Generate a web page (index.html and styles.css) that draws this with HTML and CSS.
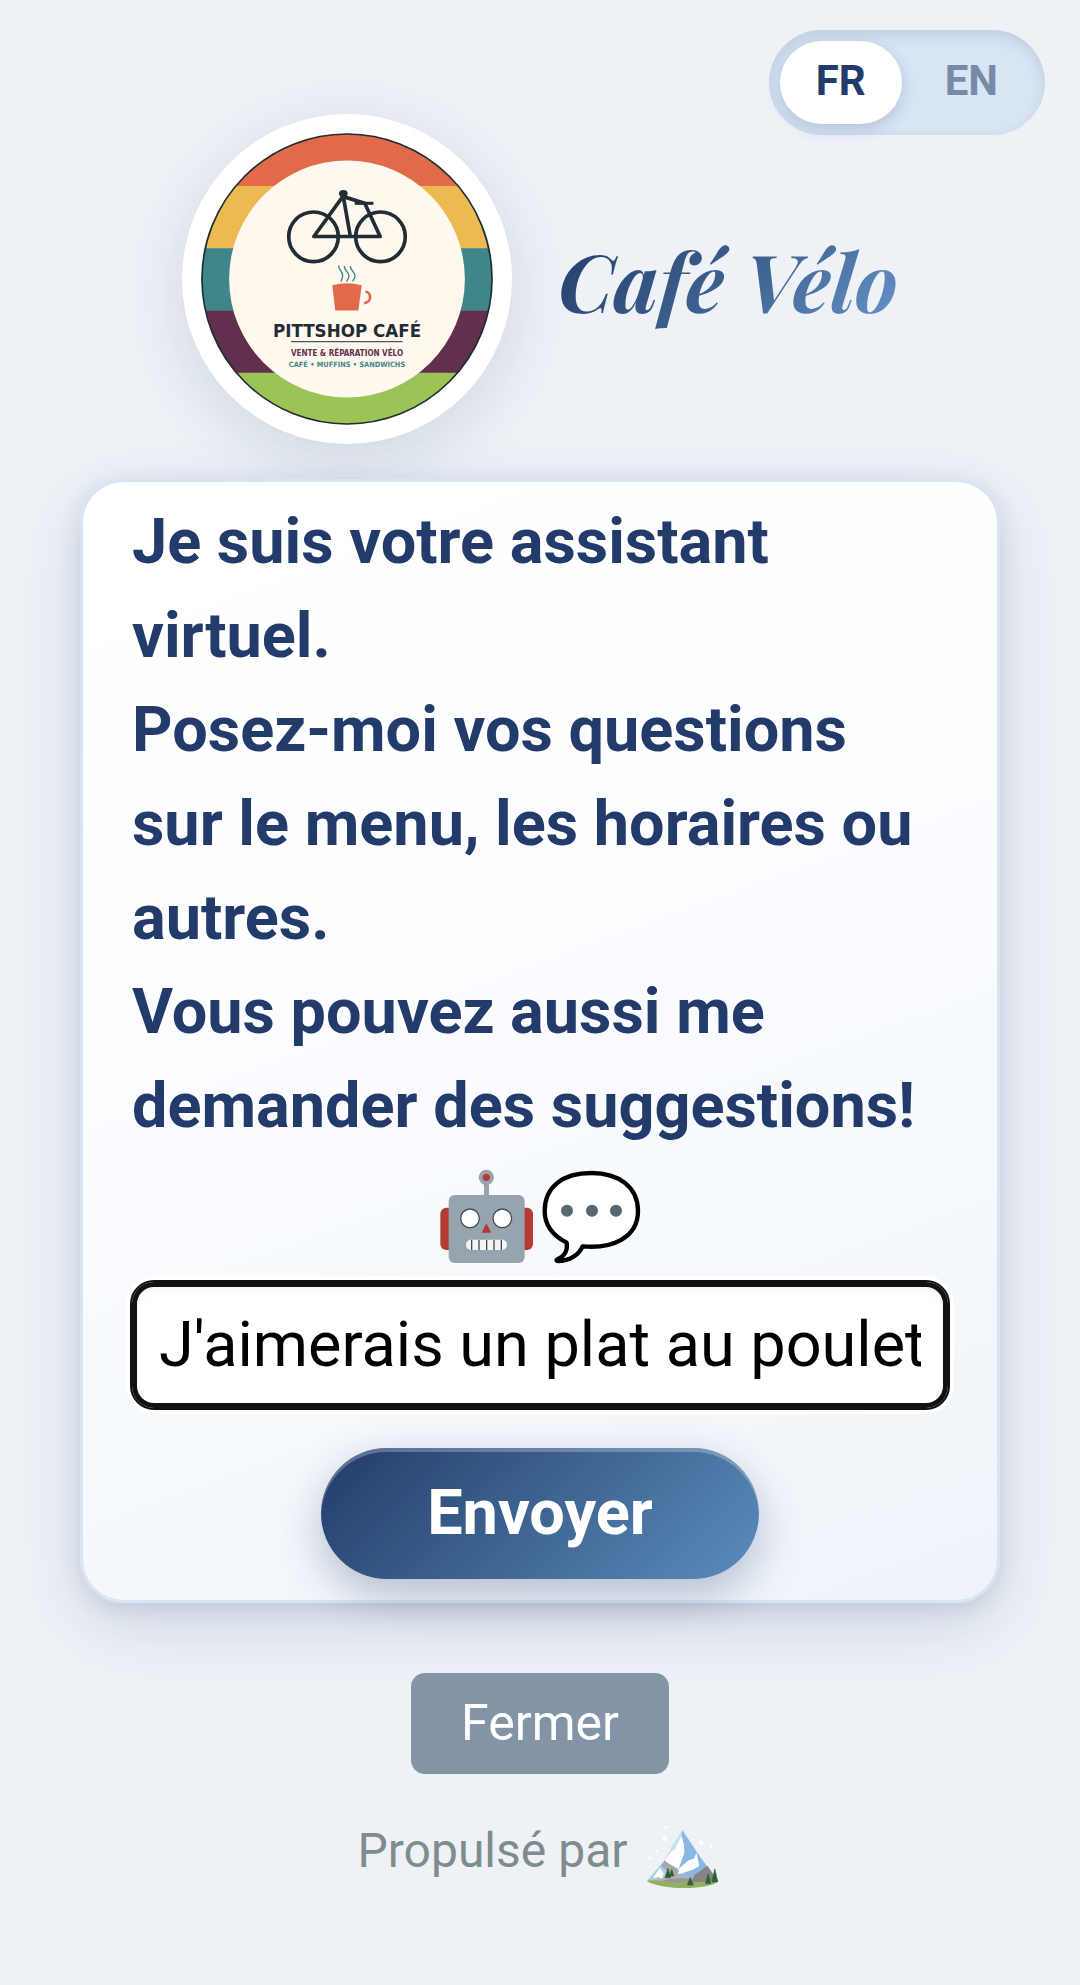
FILE: index.html
```html
<!DOCTYPE html>
<html lang="fr">
<head>
<meta charset="utf-8">
<meta name="viewport" content="width=device-width, initial-scale=1">
<title>Café Vélo</title>
<link rel="stylesheet" href="styles.css">
</head>
<body>

  <nav class="topbar">
    <div class="lang-switch">
      <button type="button" class="lang active">FR</button>
      <button type="button" class="lang">EN</button>
    </div>
  </nav>

  <header class="brand">
    <div class="logo">
      <svg viewBox="91 100 872 872" role="img" aria-label="Pittshop Café">
        <clipPath id="disc"><circle cx="527" cy="536" r="434"/></clipPath>
        <g clip-path="url(#disc)">
          <rect x="91" y="100" width="872" height="159" fill="#e06a4a"/>
          <rect x="91" y="258" width="872" height="187" fill="#ecba51"/>
          <rect x="91" y="444" width="872" height="187" fill="#3f868a"/>
          <rect x="91" y="630" width="872" height="187" fill="#62304d"/>
          <rect x="91" y="816" width="872" height="156" fill="#9ac456"/>
        </g>
        <circle cx="527" cy="536" r="433" fill="none" stroke="#212d34" stroke-width="5"/>
        <ellipse cx="527" cy="536" rx="352" ry="354" fill="#fff8ee"/>

        <!-- bike -->
        <g fill="none" stroke="#212d34" stroke-width="11">
          <circle cx="427" cy="410" r="74"/>
          <circle cx="627" cy="410" r="74"/>
          <path d="M516 288 428 409H626L580 310 516 290 537 409" stroke-linejoin="round"/>
          <path d="M550 310H606" stroke-width="9"/>
        </g>
        <ellipse cx="516" cy="281" rx="13" ry="11" fill="#212d34"/>

        <!-- cup -->
        <g fill="none" stroke="#3f868a" stroke-width="4">
          <path d="M502 495c-1 16 12 16 12 30 0 9-4 12-5 19"/>
          <path d="M519 497c-1 14 14 17 14 30 0 8-6 11-7 17"/>
          <path d="M537 497c-1 14 14 17 14 30 0 8-6 11-7 16"/>
        </g>
        <path d="M483 555q44-13 88 0L561 630H492Z" fill="#e06a4a"/>
        <path d="M582 574c8 0 14 8 14 17s-8 17-18 17" fill="none" stroke="#e06a4a" stroke-width="8"/>

        <text class="logo-name" x="527" y="708">PITTSHOP CAFÉ</text>
        <path d="M360 723H693" stroke="#4d565b" stroke-width="4"/>
        <text class="logo-line plum" x="527" y="766">VENTE &amp; RÉPARATION VÉLO</text>
        <text class="logo-line teal" x="527" y="798">CAFÉ • MUFFINS • SANDWICHS</text>
      </svg>
    </div>
    <h1>Café Vélo</h1>
  </header>

  <main class="card">
    <p class="intro">Je suis votre assistant virtuel.<br>
      Posez-moi vos questions sur le menu, les horaires ou autres.<br>
      Vous pouvez aussi me demander des suggestions!</p>

    <div class="emojis">
      <svg viewBox="60 57 606 285" aria-hidden="true">
        <!-- robot -->
        <rect x="64" y="173" width="50" height="127" rx="18" fill="#b53a33"/>
        <rect x="292" y="173" width="50" height="127" rx="18" fill="#b53a33"/>
        <rect x="195" y="95" width="15" height="45" fill="#95a4af"/>
        <circle cx="202" cy="82" r="23" fill="#95a4af"/>
        <circle cx="202" cy="82" r="11" fill="#b53a33"/>
        <rect x="89" y="135" width="228" height="204" rx="18" fill="#95a4af"/>
        <circle cx="153" cy="205" r="28" fill="#fff" stroke="#454b50" stroke-width="4"/>
        <circle cx="250" cy="205" r="28" fill="#fff" stroke="#454b50" stroke-width="4"/>
        <path d="M202 220 217 248H188Z" fill="#b53a33"/>
        <rect x="141" y="269" width="123" height="31" rx="15" fill="#f4f4f4"/>
        <path d="M158 270v30M180 270v30M203 270v30M225 270v30M247 270v30" stroke="#454b50" stroke-width="4"/>
        <!-- bubble -->
        <path d="M517 69C432 69 377 110 377 183c0 44 27 75 66 95 4 22-6 42-28 50-4 2-3 5 2 5 35 0 62-18 74-44 90 8 166-27 166-106 0-71-56-114-140-114Z" fill="#fff" stroke="#000" stroke-width="13" stroke-linejoin="round"/>
        <g fill="#586771">
          <circle cx="444" cy="182" r="18"/>
          <circle cx="519" cy="182" r="18"/>
          <circle cx="591" cy="182" r="18"/>
        </g>
      </svg>
    </div>

    <form class="ask">
      <input type="text" class="question" aria-label="Votre question" value="J'aimerais un plat au poulet">
      <button type="submit" class="send">Envoyer</button>
    </form>
  </main>

  <button type="button" class="close">Fermer</button>

  <footer class="powered">
    <span>Propulsé par</span>
    <svg viewBox="910 518 224 198" aria-hidden="true">
      <g fill="#fff">
        <circle cx="968" cy="560" r="7"/><circle cx="1080" cy="573" r="7"/>
        <circle cx="972" cy="525" r="4"/><circle cx="942" cy="598" r="4"/>
        <circle cx="922" cy="621" r="4"/><circle cx="1112" cy="584" r="4"/>
        <circle cx="1065" cy="546" r="3"/><circle cx="1113" cy="606" r="3"/>
      </g>
      <path d="M1022 534 965 630 912 692h219l-66-93Z" fill="#8ab8e2"/>
      <path d="M1022 534 990 580 982 608 1001 590 1016 562Z" fill="#c7e0f5"/>
      <path d="M1019 552 1026 577 1028 603 1010 654 965 630 983 604 1000 590Z" fill="#fff"/>
      <path d="M1065 603 1074 645 1055 656 1020 668 995 672 1012 652 1040 628 1058 622Z" fill="#fff"/>
      <path d="M965 627 1012 660 1000 682 955 672Z" fill="#a9a8a8"/>
      <path d="M1099 644 1131 690 1120 700H1045L1060 672Z" fill="#858585"/>
      <path d="M955 645 912 692 960 690 977 663Z" fill="#a8cdee"/>
      <path d="M952 650 930 682 951 678 957 688 964 668Z" fill="#fff"/>
      <path d="M912 691 965 682 1010 674 1056 676 1045 702H960Z" fill="#b3b3b2"/>
      <path d="M960 690q45-14 90-4l-10 12h-60Z" fill="#989898"/>
      <path d="M912 691c35-4 50 4 95 4 50 1 90-2 124-3-20 28-179 28-219-1Z" fill="#93b062"/>
      <path d="M977 652 968 681h17ZM989 655 982 676h13ZM1046 680 1037 704h18ZM1102 669 1093 699h16ZM1122 654 1113 694h18Z" fill="#2e5f3a" stroke="#2e5f3a" stroke-width="2"/>
    </svg>
  </footer>

</body>
</html>
```
FILE: styles.css
```css
* {box-sizing: border-box;}

body {
  margin: 0; padding: 30px 35px; min-height: 100vh;
  display: flex; flex-direction: column; align-items: center;
  background: #eef2f7; color: #233b6a;
  font-family: Roboto, "Open Sans", sans-serif;
}
button, input {font-family: inherit;}
button {border: 0; cursor: pointer;}

/*language switch*/
.topbar {align-self: stretch; display: flex; justify-content: flex-end;}
.lang-switch {
  display: flex; gap: 7px; padding: 11px;
  background: #d8e5f5; border-radius: 55px;
  box-shadow: inset 0 5px 14px rgba(35, 59, 106, .14);
}
.lang {
  padding: 0 36px 4px; height: 83px; border-radius: 42px;
  background: none; color: #778ba8;
  font-size: 42px; font-weight: 700;
}
.lang.active {
  background: #fff; color: #233b6a;
  box-shadow: 0 5px 16px rgba(35, 59, 106, .2);
}

/*header*/
.brand {
  display: flex; align-items: center; justify-content: center; gap: 46px;
  margin: -21px 0 35px;
}
.logo {
  padding: 19px; background: #fff; border-radius: 50%;
  box-shadow: 0 16px 66px rgba(35, 59, 106, .15);
}
.logo svg {display: block; width: 292px;}
.logo-name, .logo-line {text-anchor: middle; font-weight: 700;}
.logo-name {font-family: "DejaVu Sans", sans-serif; font-size: 50px; fill: #212d34;}
.logo-line {font-family: "DejaVu Sans Condensed", "DejaVu Sans", sans-serif; font-size: 24px;}
.plum {fill: #62304d;}
.teal {fill: #3f868a; font-size: 22px;}

h1 {
  margin: 0;
  font: italic 700 81px/110px "Playfair Display", "Liberation Serif", serif;
  background: linear-gradient(135deg, #233b6a, #3f6491 55%, #6a96cc);
  -webkit-background-clip: text; background-clip: text;
  color: transparent;
}

/*chat card*/
.card {
  width: calc(100% - 90px); padding: 13px 49px 21px;
  border: 3px solid #d8e5f5; border-radius: 44px;
  background: linear-gradient(160deg, #fff, #fcfdff 40%, #eff4fa);
  box-shadow: 0 22px 66px rgba(35, 59, 106, .15), 0 5px 22px rgba(35, 59, 106, .12);
}
.intro {margin: 0; font-size: 63px; font-weight: 700; line-height: 94px;}
.emojis {display: flex; justify-content: center; padding: 16px 0 18px;}
.emojis svg {width: 202px; height: 95px;}

.ask {display: flex; flex-direction: column; align-items: center; gap: 40px;}
.question {
  width: 100%; height: 126px; padding: 0 22px 2px;
  border: 5px solid #111; border-radius: 22px;
  outline: 2px solid #111;
  background: #fff; color: #000; font-size: 63px;
  box-shadow: 0 0 0 6px #fff, inset 0 5px 11px rgba(0, 0, 0, .03);
}
.send {
  padding: 0 106px 2px; height: 131px; border-radius: 66px;
  background: linear-gradient(135deg, #233b6a, #426996 55%, #5a8cbd);
  color: #fff; font-size: 63px; font-weight: 700;
  box-shadow: 0 16px 44px rgba(35, 59, 106, .3), inset 0 4px 0 rgba(255, 255, 255, .25);
}

/*below the card*/
.close {
  margin-top: 70px; padding: 0 50px 2px; height: 101px; border-radius: 14px;
  background: #8494a7; color: #fff; font-size: 50px;
}
.powered {
  display: flex; align-items: center; gap: 18px;
  margin-top: 39px; padding-right: 4px;
  color: #7f8c8d; font-size: 48px; line-height: 64px;
}
.powered svg {width: 73px; height: 64px; margin-top: 12px;}
```
